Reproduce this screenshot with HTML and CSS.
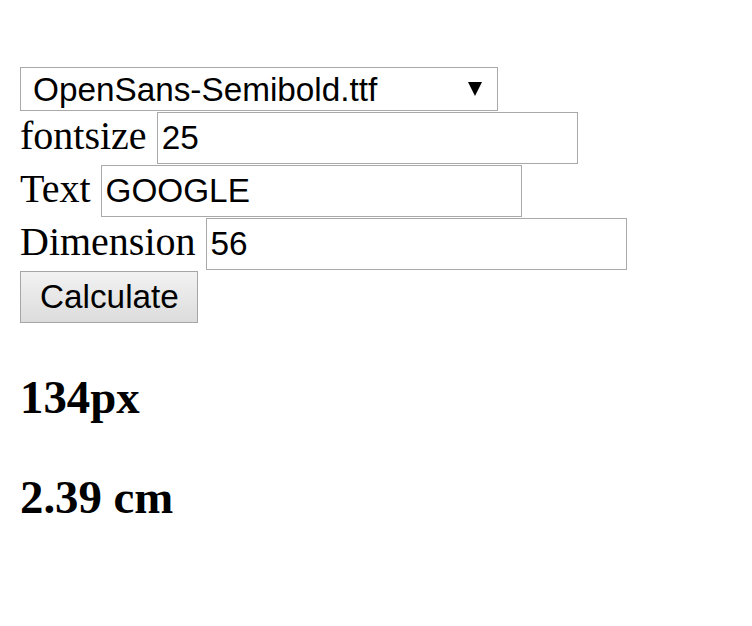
FILE: index.html
```html
<!DOCTYPE html>
<html>
<head>
<meta charset="utf-8">
<link rel="stylesheet" href="styles.css">
</head>
<body>
<form class="calc">
  <div class="row row-select"><span class="select-wrap"><select class="font-select"><option>OpenSans-Semibold.ttf</option></select></span></div>
  <div class="row"><label class="pair">fontsize <input class="field" type="text" value="25"></label></div>
  <div class="row"><label class="pair">Text <input class="field" type="text" value="GOOGLE"></label></div>
  <div class="row"><label class="pair">Dimension <input class="field" type="text" value="56"></label></div>
  <div class="row"><button class="btn" type="button">Calculate</button></div>
</form>
<h3 class="result">134px</h3>
<h3 class="result">2.39 cm</h3>
</body>
</html>
```

FILE: styles.css
```css
html, body {
  background: #ffffff;
}
body {
  margin: 20px;
  font-family: "Liberation Serif", "Times New Roman", serif;
  font-size: 40px;
  color: #000;
}
.calc {
  padding-top: 47px;
}
.row {
  display: flex;
  align-items: flex-start;
  height: 53px;
  line-height: normal;
}
.row-select {
  height: 45px;
}
.pair {
  display: flex;
  align-items: baseline;
  gap: 10px;
}
.select-wrap {
  position: relative;
  display: block;
}
.select-wrap::after {
  content: "";
  position: absolute;
  left: 448px;
  top: 15px;
  width: 0;
  height: 0;
  border-left: 7.5px solid transparent;
  border-right: 7.5px solid transparent;
  border-top: 14px solid #000;
  pointer-events: none;
}
.font-select {
  -webkit-appearance: none;
  appearance: none;
  box-sizing: border-box;
  width: 478px;
  height: 44px;
  margin: 0;
  padding: 0 0 0 12px;
  border: 1px solid #a9a9a9;
  border-radius: 0;
  background: #fff;
  color: #000;
  font-family: "Liberation Sans", Arial, sans-serif;
  font-size: 33.3px;
  display: block;
}
.field {
  box-sizing: border-box;
  width: 421px;
  height: 52px;
  margin: 0;
  padding: 6px 4px;
  border: 1px solid #a9a9a9;
  border-radius: 0;
  background: #fff;
  color: #000;
  font-family: "Liberation Sans", Arial, sans-serif;
  font-size: 33.3px;
  outline: none;
}
.btn {
  box-sizing: border-box;
  width: 178px;
  height: 52px;
  margin: 0;
  padding: 0 19px;
  border: 1px solid #a6a6a6;
  border-radius: 0;
  background: linear-gradient(#f2f2f2, #dcdcdc);
  color: #000;
  font-family: "Liberation Sans", Arial, sans-serif;
  font-size: 33.3px;
}
.result {
  font-size: 46.8px;
  font-weight: bold;
  margin: 46px 0;
  line-height: normal;
}
```
